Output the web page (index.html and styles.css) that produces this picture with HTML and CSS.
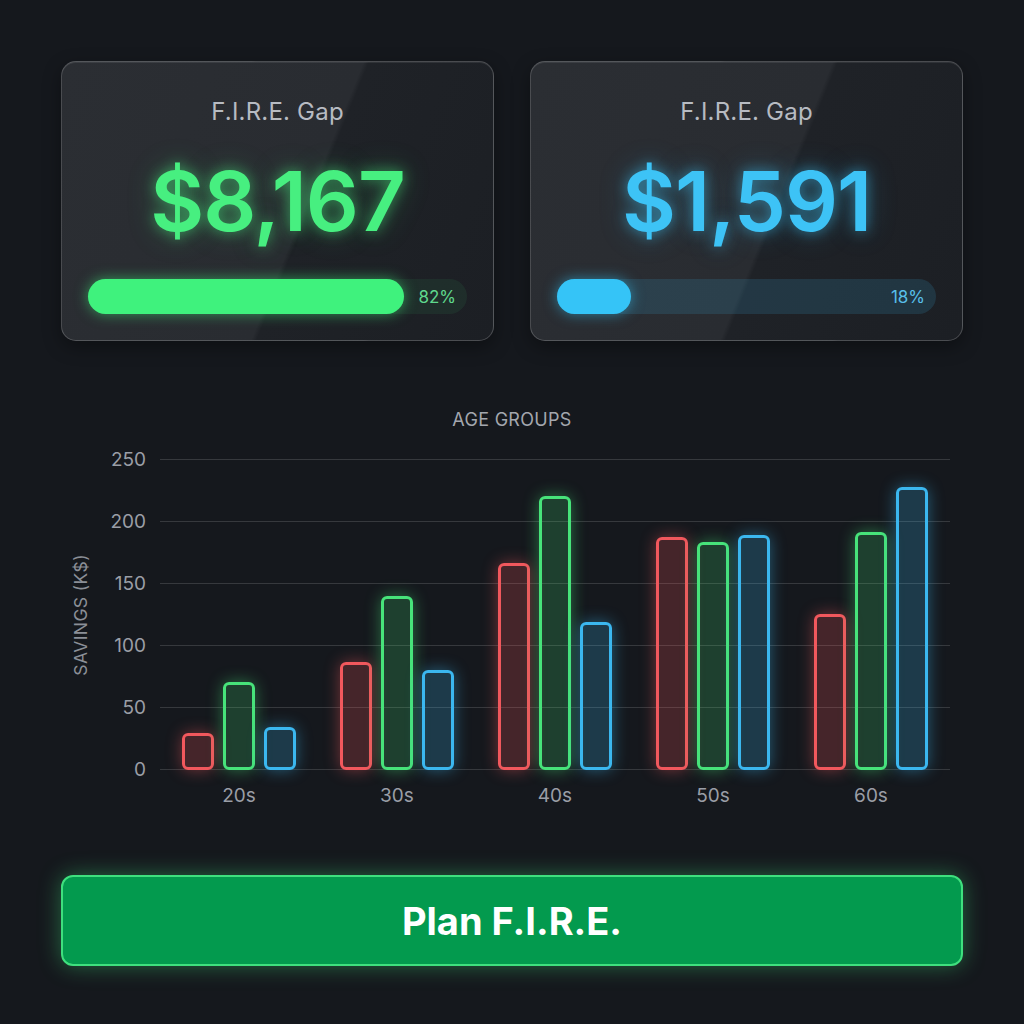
FILE: index.html
```html
<!DOCTYPE html>
<html>
<head>
<meta charset="utf-8">
<link rel="stylesheet" href="styles.css">
</head>
<body>
<div class="page">
  <div class="cards">
    <div class="card card-green">
      <div class="card-title">F.I.R.E. Gap</div>
      <div class="amount">$8,167</div>
      <div class="track">
        <div class="fill" style="width: 316px"></div>
        <span class="pct">82%</span>
      </div>
    </div>
    <div class="card card-blue">
      <div class="card-title">F.I.R.E. Gap</div>
      <div class="amount">$1,591</div>
      <div class="track">
        <div class="fill" style="width: 74px"></div>
        <span class="pct">18%</span>
      </div>
    </div>
  </div>

  <div class="chart-title">AGE GROUPS</div>
  <div class="chart">
    <div class="axis-title"><span>SAVINGS (K$)</span></div>
    <div class="yticks">
      <div class="ytick"><span>250</span></div>
      <div class="ytick"><span>200</span></div>
      <div class="ytick"><span>150</span></div>
      <div class="ytick"><span>100</span></div>
      <div class="ytick"><span>50</span></div>
      <div class="ytick"><span>0</span></div>
    </div>
    <div class="plot">
      <div class="group">
        <div class="bar red" style="height: 37px"></div>
        <div class="bar green" style="height: 88px"></div>
        <div class="bar blue" style="height: 43px"></div>
      </div>
      <div class="group">
        <div class="bar red" style="height: 108px"></div>
        <div class="bar green" style="height: 174px"></div>
        <div class="bar blue" style="height: 100px"></div>
      </div>
      <div class="group">
        <div class="bar red" style="height: 207px"></div>
        <div class="bar green" style="height: 274px"></div>
        <div class="bar blue" style="height: 148px"></div>
      </div>
      <div class="group">
        <div class="bar red" style="height: 233px"></div>
        <div class="bar green" style="height: 228px"></div>
        <div class="bar blue" style="height: 235px"></div>
      </div>
      <div class="group">
        <div class="bar red" style="height: 156px"></div>
        <div class="bar green" style="height: 238px"></div>
        <div class="bar blue" style="height: 283px"></div>
      </div>
    </div>
    <div class="xlabels">
      <div class="xlabel">20s</div>
      <div class="xlabel">30s</div>
      <div class="xlabel">40s</div>
      <div class="xlabel">50s</div>
      <div class="xlabel">60s</div>
    </div>
  </div>

  <button class="cta">Plan F.I.R.E.</button>
</div>
</body>
</html>
```

FILE: styles.css
```css
html, body {
  margin: 0;
  padding: 0;
  background: #15181d;
}

body {
  width: 1024px;
  height: 1024px;
  overflow: hidden;
  font-family: Inter, "Noto Sans", "Liberation Sans", sans-serif;
}

.page {
  padding: 61px 61px 0 61px;
  display: flex;
  flex-direction: column;
}

.cards {
  display: flex;
  gap: 36px;
}

.card {
  box-sizing: border-box;
  width: 433px;
  height: 280px;
  border-radius: 15px;
  border: 1.5px solid rgba(255, 255, 255, 0.2);
  background: linear-gradient(112deg, #2b2e33 0%, #292c31 55.5%, #1f2227 56.5%, #1c1f24 100%);
  box-shadow: inset 0 1px 0 rgba(255, 255, 255, 0.08), 0 6px 18px rgba(0, 0, 0, 0.35);
  display: flex;
  flex-direction: column;
  align-items: center;
  padding: 36px 26px 0 26px;
}

.card-title {
  font-size: 24px;
  line-height: 28px;
  color: #b7bbc2;
  letter-spacing: 0.2px;
}

.amount {
  margin-top: 34px;
  font-size: 83px;
  line-height: 82px;
  font-weight: 600;
  letter-spacing: -1px;
}

.card-green .amount {
  color: #47ef80;
  text-shadow: 0 0 14px rgba(71, 239, 128, 0.55), 0 0 30px rgba(71, 239, 128, 0.25);
}

.card-blue .amount {
  color: #3dc3f6;
  text-shadow: 0 0 14px rgba(61, 195, 246, 0.55), 0 0 30px rgba(61, 195, 246, 0.25);
}

.track {
  margin-top: 37px;
  align-self: stretch;
  height: 35px;
  border-radius: 18px;
  display: flex;
  align-items: center;
  justify-content: space-between;
}

.card-green .track {
  background: rgba(71, 239, 128, 0.07);
}

.card-blue .track {
  background: rgba(61, 180, 235, 0.15);
}

.fill {
  height: 35px;
  border-radius: 18px;
}

.card-green .fill {
  background: #3ff27d;
  box-shadow: 0 0 14px rgba(63, 242, 125, 0.55);
}

.card-blue .fill {
  background: #35c4f7;
  box-shadow: 0 0 14px rgba(53, 196, 247, 0.55);
}

.pct {
  font-size: 17px;
  padding-right: 11px;
}

.card-green .pct {
  color: #5fd88d;
}

.card-blue .pct {
  color: #58bfe9;
}

.chart-title {
  margin-top: 68px;
  text-align: center;
  font-size: 18px;
  line-height: 22px;
  color: #a3a7ae;
  letter-spacing: 0.3px;
}

.chart {
  margin-top: 28px;
  display: grid;
  grid-template-columns: 39px 46px 804px;
  grid-template-rows: 311px auto;
}

.axis-title {
  grid-column: 1;
  grid-row: 1;
  display: flex;
  align-items: center;
  justify-content: center;
}

.axis-title span {
  writing-mode: vertical-rl;
  transform: rotate(180deg);
  font-size: 17.5px;
  color: #8b8f97;
  white-space: nowrap;
  letter-spacing: 0.4px;
}

.yticks {
  grid-column: 2;
  grid-row: 1;
  display: flex;
  flex-direction: column;
  justify-content: space-between;
  padding-bottom: 1px;
}

.ytick {
  height: 0;
  display: flex;
  align-items: center;
  justify-content: flex-end;
}

.ytick span {
  font-size: 19px;
  color: #9a9ea6;
}

.plot {
  grid-column: 3;
  grid-row: 1;
  margin-left: 14px;
  height: 311px;
  background: repeating-linear-gradient(to bottom, rgba(255, 255, 255, 0.14) 0, rgba(255, 255, 255, 0.14) 1px, transparent 1px, transparent 62px);
  display: flex;
  align-items: flex-end;
}

.group {
  flex: 1;
  display: flex;
  justify-content: center;
  align-items: flex-end;
  gap: 9px;
}

.bar {
  box-sizing: border-box;
  width: 32px;
  border-radius: 6px;
  border: 3px solid;
}

.bar.red {
  border-color: #f1585d;
  background: rgba(241, 88, 93, 0.22);
  box-shadow: 0 0 16px rgba(241, 88, 93, 0.45);
}

.bar.green {
  border-color: #47e37a;
  background: rgba(71, 227, 122, 0.2);
  box-shadow: 0 0 16px rgba(71, 227, 122, 0.45);
}

.bar.blue {
  border-color: #3bb7ef;
  background: rgba(59, 183, 239, 0.22);
  box-shadow: 0 0 16px rgba(59, 183, 239, 0.45);
}

.xlabels {
  grid-column: 3;
  grid-row: 2;
  margin-left: 14px;
  margin-top: 15px;
  display: flex;
}

.xlabel {
  flex: 1;
  text-align: center;
  font-size: 19px;
  line-height: 22px;
  color: #9a9ea6;
}

.cta {
  margin-top: 68px;
  box-sizing: border-box;
  width: 902px;
  height: 91px;
  border-radius: 12px;
  border: 2px solid #3fe07e;
  background: #039a4e;
  box-shadow: 0 0 22px rgba(63, 224, 126, 0.4);
  color: #ffffff;
  font-family: Inter, "Noto Sans", "Liberation Sans", sans-serif;
  font-size: 38px;
  font-weight: 700;
  letter-spacing: 0;
  cursor: pointer;
}
```
